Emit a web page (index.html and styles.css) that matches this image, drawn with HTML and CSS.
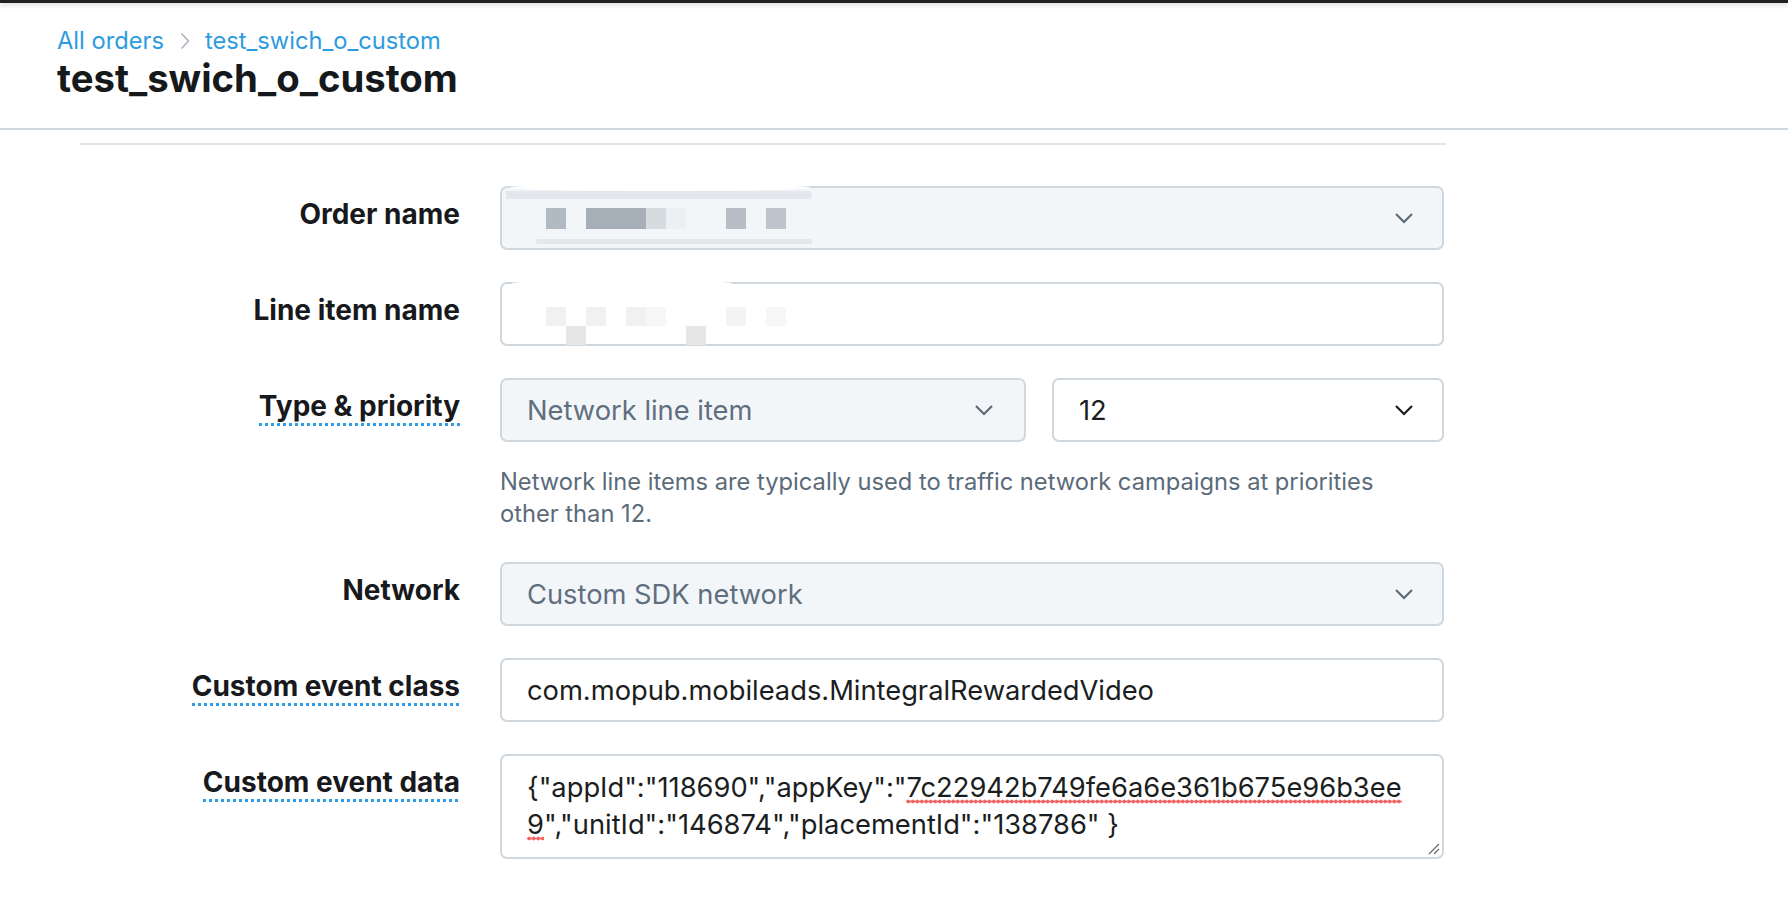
FILE: index.html
```html
<!DOCTYPE html>
<html lang="en">
<head>
<meta charset="utf-8">
<title>test_swich_o_custom</title>
<link rel="stylesheet" href="styles.css">
</head>
<body>
<div class="topbar"></div>
<header class="page-header">
  <nav class="breadcrumb">
    <a class="crumb" href="#">All orders</a>
    <svg class="crumb-sep" width="10" height="18" viewBox="0 0 10 18"><path d="M1.5 1.5 L8.5 9 L1.5 16.5" fill="none" stroke="#a9b4be" stroke-width="1.6"/></svg>
    <a class="crumb" href="#">test_swich_o_custom</a>
  </nav>
  <h1 class="title">test_swich_o_custom</h1>
</header>

<main class="content">
  <section class="form-card">

    <div class="row">
      <div class="label"><span>Order name</span></div>
      <div class="field">
        <div class="control select disabled redacted">
          <div class="smear smear-top"></div>
          <div class="smear smear-band"></div>
          <div class="smear smear-bottom"></div>
          <div class="blocks">
            <i class="b b1"></i><i class="gap"></i><i class="b b2"></i><i class="b b2"></i><i class="b b2"></i><i class="b b3"></i><i class="b b4"></i><i class="gap2"></i><i class="b b5"></i><i class="gap"></i><i class="b b6"></i>
          </div>
          <svg class="chev" width="20" height="12" viewBox="0 0 20 12"><path d="M2 2 L10 10 L18 2" fill="none" stroke="#5c6a78" stroke-width="2.2"/></svg>
        </div>
      </div>
    </div>

    <div class="row">
      <div class="label"><span>Line item name</span></div>
      <div class="field">
        <div class="control input redacted">
          <div class="smear smear-top white"></div>
          <div class="blocks faint">
            <span class="col"><i class="f f1"></i><i class="f none"></i></span>
            <span class="col"><i class="f none"></i><i class="f f2"></i></span>
            <span class="col"><i class="f f1"></i><i class="f none"></i></span>
            <span class="col"><i class="f none"></i><i class="f none"></i></span>
            <span class="col"><i class="f f1"></i><i class="f none"></i></span>
            <span class="col"><i class="f f3"></i><i class="f none"></i></span>
            <span class="col"><i class="f none"></i><i class="f none"></i></span>
            <span class="col"><i class="f none"></i><i class="f f2"></i></span>
            <span class="col"><i class="f none"></i><i class="f none"></i></span>
            <span class="col"><i class="f f4"></i><i class="f none"></i></span>
            <span class="col"><i class="f none"></i><i class="f none"></i></span>
            <span class="col"><i class="f f3"></i><i class="f none"></i></span>
          </div>
        </div>
      </div>
    </div>

    <div class="row">
      <div class="label"><span class="hint">Type &amp; priority</span></div>
      <div class="field">
        <div class="pair">
          <div class="control select disabled type-select">
            <span class="value muted">Network line item</span>
            <svg class="chev" width="20" height="12" viewBox="0 0 20 12"><path d="M2 2 L10 10 L18 2" fill="none" stroke="#5c6a78" stroke-width="2.2"/></svg>
          </div>
          <div class="control select prio-select">
            <span class="value">12</span>
            <svg class="chev" width="20" height="12" viewBox="0 0 20 12"><path d="M2 2 L10 10 L18 2" fill="none" stroke="#1b1e21" stroke-width="2.2"/></svg>
          </div>
        </div>
        <p class="help">Network line items are typically used to traffic network campaigns at priorities other than 12.</p>
      </div>
    </div>

    <div class="row">
      <div class="label"><span>Network</span></div>
      <div class="field">
        <div class="control select disabled">
          <span class="value muted">Custom SDK network</span>
          <svg class="chev" width="20" height="12" viewBox="0 0 20 12"><path d="M2 2 L10 10 L18 2" fill="none" stroke="#5c6a78" stroke-width="2.2"/></svg>
        </div>
      </div>
    </div>

    <div class="row">
      <div class="label"><span class="hint">Custom event class</span></div>
      <div class="field">
        <div class="control input">
          <span class="value">com.mopub.mobileads.MintegralRewardedVideo</span>
        </div>
      </div>
    </div>

    <div class="row">
      <div class="label"><span class="hint">Custom event data</span></div>
      <div class="field">
        <div class="control textarea">
          <div class="ta-text">{"appId":"118690","appKey":"<span class="spell">7c22942b749fe6a6e361b675e96b3ee</span><br><span class="spell">9</span>","unitId":"146874","placementId":"138786" }</div>
          <svg class="grip" width="14" height="14" viewBox="0 0 14 14"><path d="M13 3 L3 13 M13 8 L8 13" stroke="#6b6b6b" stroke-width="1.3" fill="none"/></svg>
        </div>
      </div>
    </div>

  </section>
</main>
</body>
</html>
```

FILE: styles.css
```css
* { box-sizing: border-box; }

html, body {
  margin: 0;
  padding: 0;
  background: #ffffff;
}

body {
  font-family: Inter, "Noto Sans", "Liberation Sans", sans-serif;
  color: #1b1e21;
  width: 1788px;
  height: 904px;
  overflow: hidden;
}

.topbar {
  height: 3px;
  background: #1e2022;
  box-shadow: 0 2px 5px rgba(0, 0, 0, 0.2);
  position: relative;
  z-index: 1;
}

.page-header {
  padding: 24px 0 27px 57px;
  border-bottom: 2px solid #cfd7de;
}

.breadcrumb {
  display: flex;
  align-items: center;
  height: 28px;
  font-size: 23.7px;
  line-height: 28px;
}

.crumb {
  color: #2e9be0;
  text-decoration: none;
}

.crumb-sep {
  margin: 0 15px 0 16px;
}

.title {
  margin: 0;
  font-size: 38.3px;
  line-height: 46px;
  font-weight: 700;
  color: #16191c;
}

.content {
  padding: 13px 0 0 80px;
}

.form-card {
  width: 1366px;
  border-top: 2px solid #e6e4e2;
  padding-top: 41px;
}

.row {
  display: grid;
  grid-template-columns: 380px 944px;
  column-gap: 40px;
  margin-bottom: 32px;
}

.label {
  text-align: right;
  padding-top: 12px;
  font-size: 28px;
  font-weight: 700;
  line-height: 33px;
  color: #17191c;
}

.label span {
  display: inline-block;
}

.label .hint {
  background-image: linear-gradient(to right, #2d9fe8 0 3px, transparent 3px 6px);
  background-size: 6px 3px;
  background-repeat: repeat-x;
  background-position: left bottom;
  padding-bottom: 3px;
}

.control {
  position: relative;
  height: 64px;
  border: 2px solid #d0d8df;
  border-radius: 7px;
  display: flex;
  align-items: center;
  padding: 0 26px 0 25px;
  font-size: 27.3px;
  color: #1b1e21;
  background: #ffffff;
}

.select {
  justify-content: space-between;
}

.select.disabled {
  background: #f3f6f9;
}

.value.muted {
  color: #5f6f7e;
}

.chev {
  flex: none;
  margin-right: 2px;
}

.pair {
  display: flex;
  gap: 26px;
}

.type-select {
  width: 526px;
  padding-right: 28px;
}

.prio-select {
  width: 392px;
}

.help {
  margin: 24px 0 0;
  font-size: 23.7px;
  line-height: 32px;
  color: #5b6b7a;
  max-width: 900px;
}

/* redacted content */
.blocks {
  display: flex;
  align-items: center;
  margin-left: 19px;
}

.blocks .b {
  display: block;
  width: 20px;
  height: 21px;
}

.blocks .gap { display: block; width: 20px; }
.blocks .gap2 { display: block; width: 40px; }

.b1 { background: #b1bac2; }
.b2 { background: #a6afb8; }
.b3 { background: #d6dbe0; }
.b4 { background: #edf0f3; }
.b5 { background: #b6bdc5; }
.b6 { background: #bdc4cb; }

.blocks.faint {
  align-items: flex-start;
  margin-top: 24px;
}

.blocks .col {
  display: flex;
  flex-direction: column;
}

.blocks .f {
  display: block;
  width: 20px;
  height: 19px;
}

.f1 { background: #f1f1f1; }
.f2 { background: #e7e7e7; }
.f3 { background: #f7f7f7; }
.f4 { background: #f4f4f4; }
.f.none { background: transparent; }

.smear {
  position: absolute;
  pointer-events: none;
}

.smear-top {
  left: 8px;
  top: -4px;
  width: 300px;
  height: 7px;
  background: #ffffff;
  border-radius: 50%;
}

.smear-top.white {
  left: 10px;
  width: 220px;
}

.smear-band {
  left: 4px;
  top: 3px;
  width: 306px;
  height: 8px;
  background: #e3e7eb;
  border-radius: 0 8px 8px 0;
}

.smear-bottom {
  left: 34px;
  top: 51px;
  width: 276px;
  height: 5px;
  background: #e3e7eb;
  border-radius: 4px;
}

.textarea {
  height: 105px;
  align-items: flex-start;
  padding-top: 13px;
}

.ta-text {
  line-height: 37px;
  white-space: nowrap;
}

.spell {
  background-image: radial-gradient(circle, #f26464 1.8px, transparent 2.2px);
  background-size: 4.5px 5px;
  background-repeat: repeat-x;
  background-position: 0 100%;
}

.grip {
  position: absolute;
  right: 2px;
  bottom: 2px;
}
```
